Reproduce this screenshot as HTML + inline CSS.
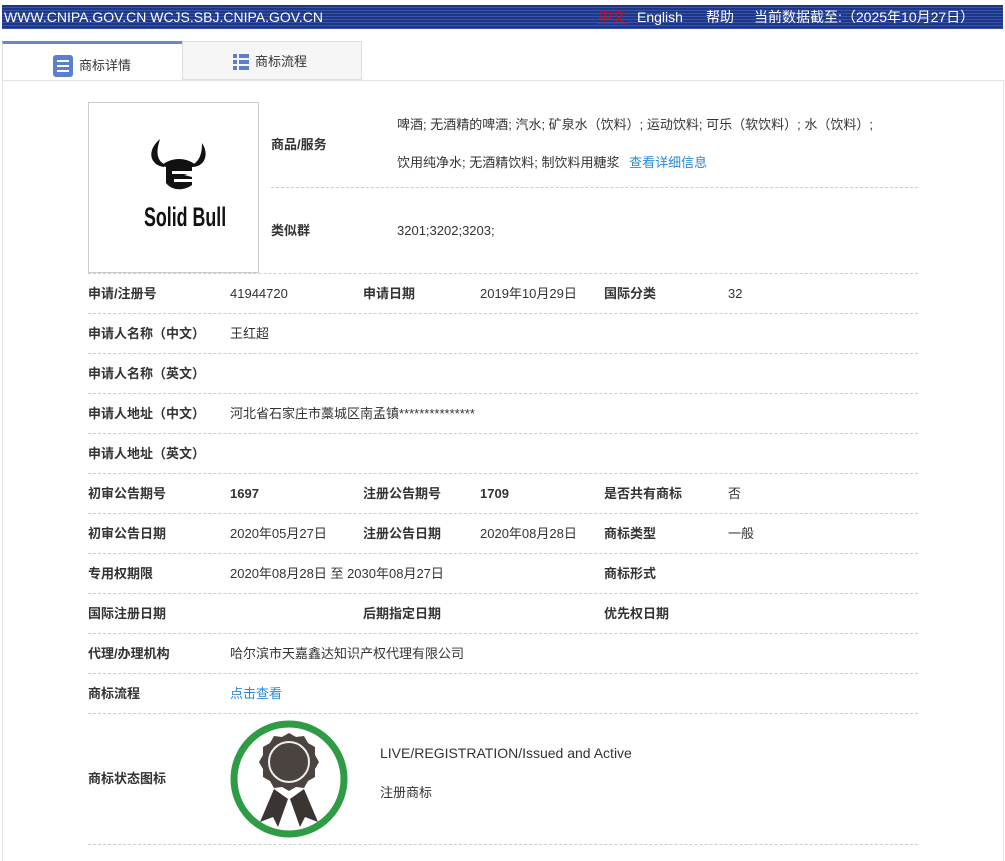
<!DOCTYPE html>
<html><head><meta charset="utf-8"><style>
body{margin:0;width:1005px;height:847px;overflow:hidden;background:#fff;font-family:"Liberation Sans","Noto Sans CJK SC",sans-serif;font-size:13px;color:#333;position:relative;line-height:16px}
.top{position:absolute;left:2px;top:5px;width:1001px;height:24px;background:repeating-linear-gradient(#1e3687 0 2px,#3a55a8 2px 3px);color:#fff;font-size:14px}
.top span{position:absolute;top:4px}
.tab{position:absolute;top:41px;height:39px;box-sizing:border-box;border:1px solid #ddd;font-size:13px}
.box{position:absolute;left:2px;top:80px;width:1000px;height:780px;border:1px solid #e3e3e3;border-bottom:none}
.t{position:absolute;white-space:nowrap}
.b{font-weight:bold;color:#333}
.l{position:absolute;height:0;border-top:1px dashed #ccc}
.a{color:#2a8ad4}
</style></head><body>
<div class="top"><span style="left:2px">WWW.CNIPA.GOV.CN WCJS.SBJ.CNIPA.GOV.CN</span><span style="left:596px;color:#e00;text-decoration:underline">中文</span><span style="left:635px">English</span><span style="left:704px">帮助</span><span style="left:752px">当前数据截至:（2025年10月27日）</span></div>
<div class="tab" style="left:2px;width:181px;border-top:3px solid #6b87c8;background:#fff;border-bottom:none">
<svg style="position:absolute;left:50px;top:11px" width="20" height="22"><rect x="0" y="0" width="20" height="22" rx="3" fill="#5b7fc8"/><rect x="4" y="5" width="12" height="2" fill="#fff"/><rect x="4" y="10" width="12" height="2" fill="#fff"/><rect x="4" y="15" width="12" height="2" fill="#fff"/></svg>
<span class="t" style="left:76px;top:14px">商标详情</span></div>
<div class="tab" style="left:182px;width:180px;background:#f6f6f6">
<svg style="position:absolute;left:50px;top:12px" width="16" height="16"><rect x="0" y="0" width="4" height="4" fill="#5b7fc8"/><rect x="6" y="0" width="10" height="4" fill="#5b7fc8"/><rect x="0" y="6" width="4" height="4" fill="#5b7fc8"/><rect x="6" y="6" width="10" height="4" fill="#5b7fc8"/><rect x="0" y="12" width="4" height="4" fill="#5b7fc8"/><rect x="6" y="12" width="10" height="4" fill="#5b7fc8"/></svg>
<span class="t" style="left:72px;top:12px">商标流程</span></div>
<div class="box"></div>
<div style="position:absolute;left:88px;top:102px;width:169px;height:169px;border:1px solid #ccc"></div>
<svg style="position:absolute;left:146px;top:139px" width="70" height="60"><path d="M14 0 C0 12 4 26 18 28 L20 26 C10 22 10 12 14 0Z M56 4 C64 16 58 28 46 28 L46 26 C54 22 56 14 56 4Z" fill="#111"/><path d="M16 26 C26 18 40 18 50 26 L46 28 L46 34 L38 36 L46 38 L46 46 C38 52 26 52 20 44 L20 28Z" fill="#111"/><rect x="26" y="32" width="20" height="3" fill="#fff"/><rect x="28" y="40" width="18" height="3" fill="#fff"/></svg>
<div class="t" style="left:144px;top:202px;font-size:27px;line-height:30px;font-weight:bold;color:#111;transform:scaleX(.66);transform-origin:left">Solid Bull</div>
<div class="t b" style="left:271px;top:137px">商品/服务</div>
<div class="t" style="left:397px;top:117px">啤酒; 无酒精的啤酒; 汽水; 矿泉水（饮料）; 运动饮料; 可乐（软饮料）; 水（饮料）;</div>
<div class="t" style="left:397px;top:155px">饮用纯净水; 无酒精饮料; 制饮料用糖浆 <span class="a" style="margin-left:6px">查看详细信息</span></div>
<div class="l" style="left:271px;top:187px;width:647px"></div>
<div class="t b" style="left:271px;top:223px">类似群</div>
<div class="t" style="left:397px;top:223px">3201;3202;3203;</div>
<div class="l" style="left:88px;top:273px;width:830px"></div>
<div id="rows"></div>
<svg style="position:absolute;left:230px;top:719px" width="120" height="120"><circle cx="59" cy="60" r="55" fill="none" stroke="#2e9b45" stroke-width="7"/><path d="M44 70 L30 103 L43 98 L48 108 L58 80Z M74 70 L88 103 L75 98 L70 108 L60 80Z" fill="#3a3533"/><path d="M59 14 L66 18 L74 17 L78 24 L85 28 L85 36 L89 43 L85 50 L85 58 L78 62 L74 69 L66 68 L59 72 L52 68 L44 69 L40 62 L33 58 L33 50 L29 43 L33 36 L33 28 L40 24 L44 17 L52 18Z" fill="#4a4340"/><circle cx="59" cy="43" r="20" fill="none" stroke="#eee" stroke-width="2"/></svg>
<div class="t b" style="left:88px;top:771px">商标状态图标</div>
<div class="t" style="left:380px;top:745px;font-size:14px">LIVE/REGISTRATION/Issued and Active</div>
<div class="t" style="left:380px;top:785px">注册商标</div>
<div class="l" style="left:88px;top:844px;width:830px"></div>
<script>
var R=[["申请/注册号","41944720","申请日期","2019年10月29日","国际分类","32"],["申请人名称（中文）","王红超"],["申请人名称（英文）",""],["申请人地址（中文）","河北省石家庄市藁城区南孟镇***************"],["申请人地址（英文）",""],["初审公告期号","<b>1697</b>","注册公告期号","<b>1709</b>","是否共有商标","否"],["初审公告日期","2020年05月27日","注册公告日期","2020年08月28日","商标类型","一般"],["专用权期限","2020年08月28日 至 2030年08月27日","","","商标形式",""],["国际注册日期","","后期指定日期","","优先权日期",""],["代理/办理机构","哈尔滨市天嘉鑫达知识产权代理有限公司"],["商标流程","<span class=a>点击查看</span>"]];
var X=[88,230,363,480,604,728],h="";
R.forEach(function(r,i){var y=286+i*40;r.forEach(function(c,j){if(c)h+='<div class="t'+(j%2?'':' b')+'" style="left:'+X[j]+'px;top:'+y+'px">'+c+'</div>'});h+='<div class="l" style="left:88px;top:'+(y+27)+'px;width:830px"></div>'});
document.getElementById('rows').innerHTML=h;
</script>
</body></html>
